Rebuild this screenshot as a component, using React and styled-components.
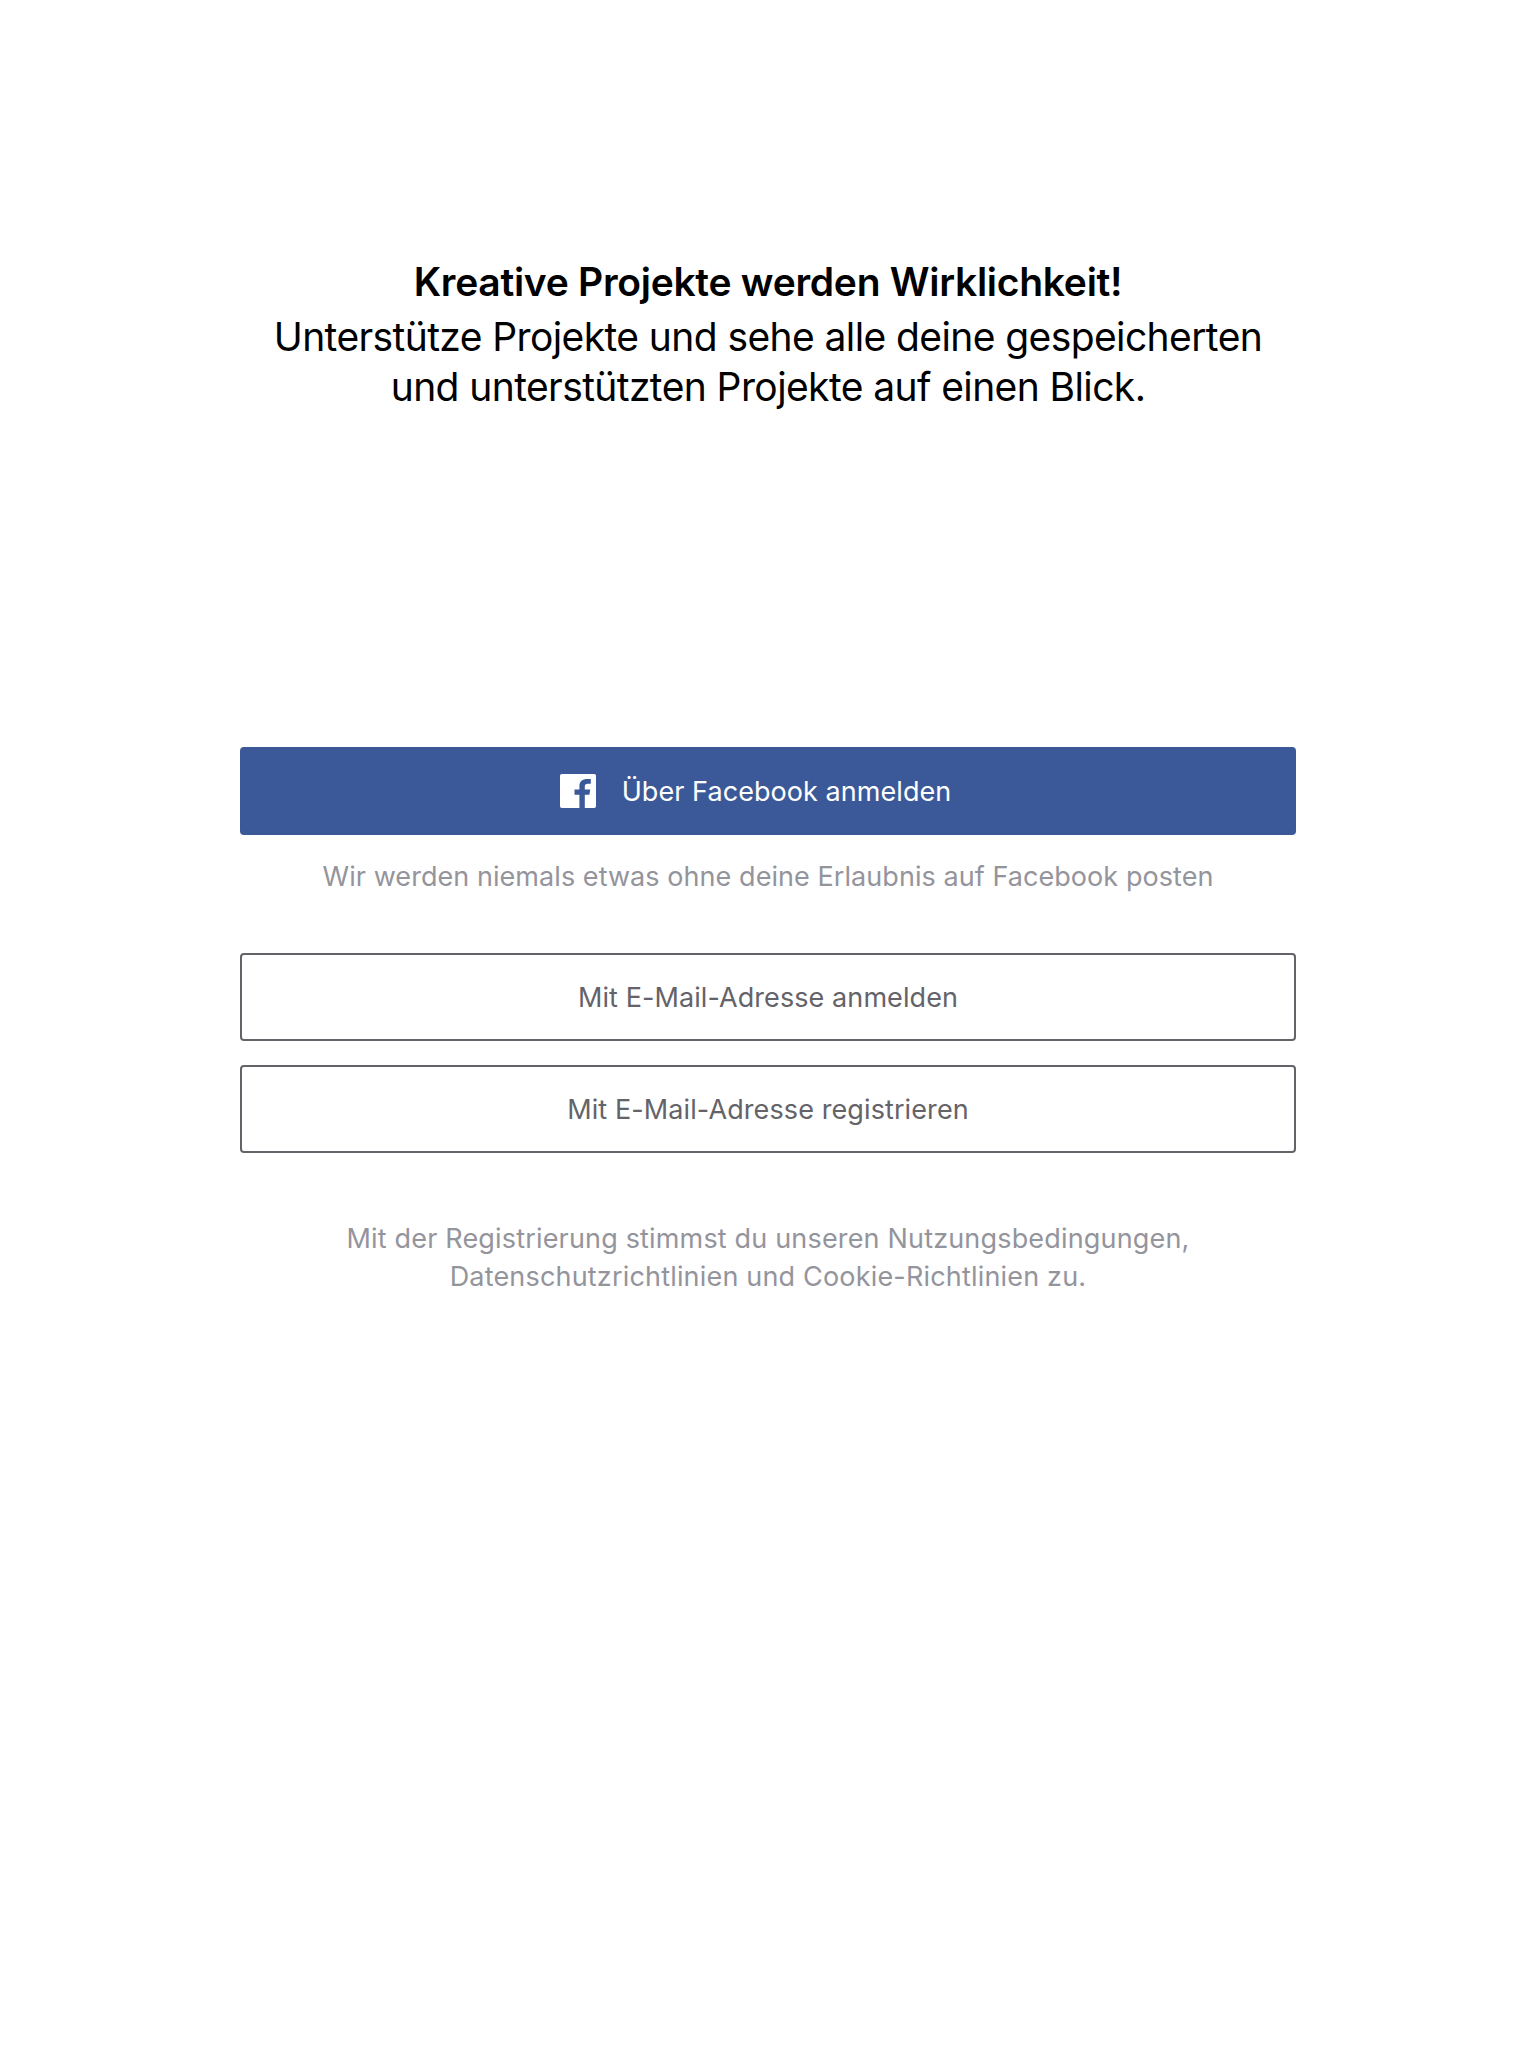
import React from "react";
import styled, { createGlobalStyle } from "styled-components";

const Global = createGlobalStyle`
  * { box-sizing: border-box; }
  body { margin: 0; background: #fff; }
`;
const Page = styled.main`
  width: 1536px;
  height: 2048px;
  padding: 0 240px;
  display: flex;
  flex-direction: column;
  align-items: center;
  font-family: Inter, "Liberation Sans", sans-serif;
  background: #fff;
`;
const Intro = styled.header`
  height: 747px;
  padding-top: 257px;
  text-align: center;
  color: #000;
`;
const Title = styled.h1`
  margin: 0;
  font-size: 39px;
  line-height: 50px;
  font-weight: 600;
`;
const Lead = styled.p`
  margin: 5px 0 0;
  font-size: 39px;
  line-height: 50px;
`;
const Line = styled.span`
  display: block;
  white-space: nowrap;
  letter-spacing: ${(p) => p.$track || 0}px;
`;
const Button = styled.button`
  width: 1056px;
  height: 88px;
  padding: ${(p) => (p.$primary ? "0 25px 0 0" : "0")};
  display: flex;
  align-items: center;
  justify-content: center;
  border-radius: 4px;
  border: 2px solid ${(p) => (p.$primary ? "#3b5998" : "#646369")};
  background: ${(p) => (p.$primary ? "#3b5998" : "#fff")};
  color: ${(p) => (p.$primary ? "#fff" : "#646369")};
  font: 400 27px Inter, "Liberation Sans", sans-serif;
`;
const Note = styled.p`
  margin: ${(p) => p.$margin};
  font-size: 27px;
  line-height: 38px;
  color: #94949c;
  text-align: center;
`;
const Actions = styled.div`
  display: flex;
  flex-direction: column;
  gap: 24px;
`;
const Logo = styled.svg`
  width: 36px;
  height: 34px;
  margin-right: 26px;
`;

export default function App() {
  return (
    <Page>
      <Global />
      <Intro>
        <Title><Line $track={-0.28}>Kreative Projekte werden Wirklichkeit!</Line></Title>
        <Lead>
          <Line $track={-0.6}>Unterstütze Projekte und sehe alle deine gespeicherten</Line>
          <Line $track={-0.6}>und unterstützten Projekte auf einen Blick.</Line>
        </Lead>
      </Intro>
      <Button $primary>
        <Logo viewBox="0 0 36 34">
          <path fill="#fff" d="M1.800 0H34.200Q36 0 36 1.800V32.200Q36 34 34.200 34H24.800V20.700H29.400L30.200 15.500H24.800V12.400C24.800 10.600 25.700 9.700 27.700 9.700H30.800V5.100C29.800 5 28.700 4.900 27.400 4.900C22.500 4.900 19.400 7.300 19.400 12V15.500H14.500V20.700H19.400V34H1.800Q0 34 0 32.200V1.800Q0 0 1.800 0Z" />
        </Logo>
        <Line $track={0.06}>Über Facebook anmelden</Line>
      </Button>
      <Note $margin="23px 0 57px">
        <Line $track={0.06}>Wir werden niemals etwas ohne deine Erlaubnis auf Facebook posten</Line>
      </Note>
      <Actions>
        <Button><Line $track={0.08}>Mit E-Mail-Adresse anmelden</Line></Button>
        <Button><Line $track={0.1}>Mit E-Mail-Adresse registrieren</Line></Button>
      </Actions>
      <Note $margin="67px 0 0">
        <Line $track={0.17}>Mit der Registrierung stimmst du unseren Nutzungsbedingungen,</Line>
        <Line $track={0.18}>Datenschutzrichtlinien und Cookie-Richtlinien zu.</Line>
      </Note>
    </Page>
  );
}
